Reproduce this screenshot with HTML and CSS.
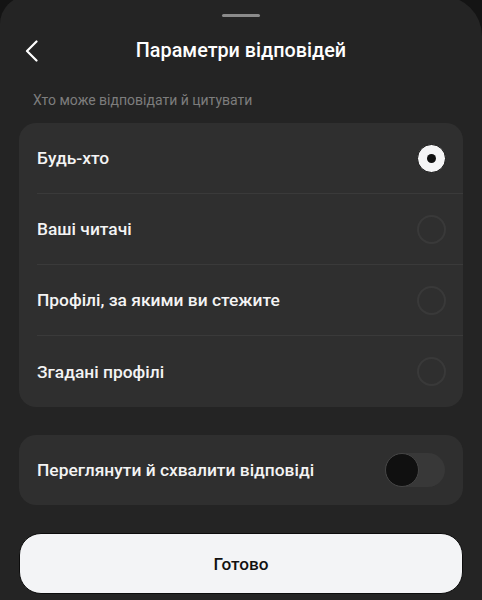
FILE: index.html
```html
<!DOCTYPE html>
<html lang="uk">
<head>
    <meta charset="UTF-8">
    <meta name="viewport" content="width=device-width, initial-scale=1.0">
    <title>Параметри відповідей</title>
    <link rel="stylesheet" href="styles.css">
</head>
<body>
    <div class="sheet">
        <div class="handle"></div>

        <!-- Header -->
        <div class="header">
            <button class="back-btn" aria-label="Назад">
                <svg width="14" height="22" viewBox="0 0 14 22">
                    <path d="M11.5 1.5 L2 11 L11.5 20.5" fill="none" stroke="#fff" stroke-width="2.2" stroke-linecap="round" stroke-linejoin="round"/>
                </svg>
            </button>
            <h1 class="title">Параметри відповідей</h1>
            <span></span>
        </div>

        <p class="section-label">Хто може відповідати й цитувати</p>

        <!-- Audience options -->
        <div class="card">
            <div class="option">
                <span>Будь-хто</span>
                <span class="radio checked"></span>
            </div>
            <div class="option">
                <span>Ваші читачі</span>
                <span class="radio"></span>
            </div>
            <div class="option">
                <span>Профілі, за якими ви стежите</span>
                <span class="radio"></span>
            </div>
            <div class="option">
                <span>Згадані профілі</span>
                <span class="radio"></span>
            </div>
        </div>

        <!-- Review toggle -->
        <div class="card toggle-card">
            <div class="option">
                <span>Переглянути й схвалити відповіді</span>
                <span class="switch"><span class="knob"></span></span>
            </div>
        </div>

        <button class="done-btn">Готово</button>
    </div>
</body>
</html>
```

FILE: styles.css
```css
/* General Reset */
* {
    box-sizing: border-box;
    margin: 0;
    padding: 0;
}
body {
    background: #141414;
    font-family: Roboto, "Noto Sans", Arial, sans-serif;
    color: #f4f4f4;
    overflow: hidden;
}

/* Bottom sheet */
.sheet {
    background: #242424;
    min-height: 620px;
    margin-top: -4px;
    padding-top: 4px;
    border-radius: 28px 40px 0 0;
}
.handle {
    width: 38px;
    height: 3px;
    margin: 14px auto 0;
    background: #8a8a8a;
    border-radius: 2px;
}

/* Header */
.header {
    display: grid;
    grid-template-columns: 60px 1fr 60px;
    align-items: center;
    height: 66px;
}
.back-btn {
    display: flex;
    align-items: center;
    background: none;
    border: none;
    padding-left: 25px;
    padding-top: 1px;
    cursor: pointer;
}
.title {
    text-align: center;
    font-size: 19.8px;
    font-weight: 500;
    color: #fff;
}
.section-label {
    padding: 7px 33px 0;
    font-size: 14px;
    line-height: 20px;
    color: #7d7d7d;
}

/* Cards */
.card {
    margin: 13px 19px 0;
    padding-left: 18px;
    background: #2f2f2f;
    border-radius: 17px;
}
.option {
    display: flex;
    align-items: center;
    justify-content: space-between;
    height: 71px;
    padding-right: 17px;
    border-bottom: 1px solid #3a3a3a;
    font-size: 17.4px;
    font-weight: 500;
}
.option:last-child {
    border-bottom: none;
}
.toggle-card {
    margin-top: 28px;
}
.toggle-card .option {
    height: 70px;
    padding-right: 18px;
}

/* Radio buttons */
.radio {
    width: 29px;
    height: 29px;
    border-radius: 50%;
    border: 2px solid #393939;
}
.radio.checked {
    display: flex;
    align-items: center;
    justify-content: center;
    background: #f5f5f6;
    border: 1px solid #111;
}
.radio.checked::after {
    content: "";
    width: 9px;
    height: 9px;
    border-radius: 50%;
    background: #111;
}

/* Switch */
.switch {
    display: flex;
    align-items: center;
    width: 60px;
    height: 34px;
    border-radius: 17px;
    background: #383838;
}
.knob {
    width: 34px;
    height: 34px;
    border-radius: 50%;
    background: #101010;
    border: 1px solid #454545;
}

/* Done button */
.done-btn {
    display: block;
    width: 444px;
    height: 61px;
    margin: 28px 19px 0;
    background: #f3f4f6;
    border: 1px solid #0c0c0c;
    border-radius: 22px;
    font-family: inherit;
    font-size: 17.2px;
    font-weight: 500;
    color: #111;
    cursor: pointer;
}
```
